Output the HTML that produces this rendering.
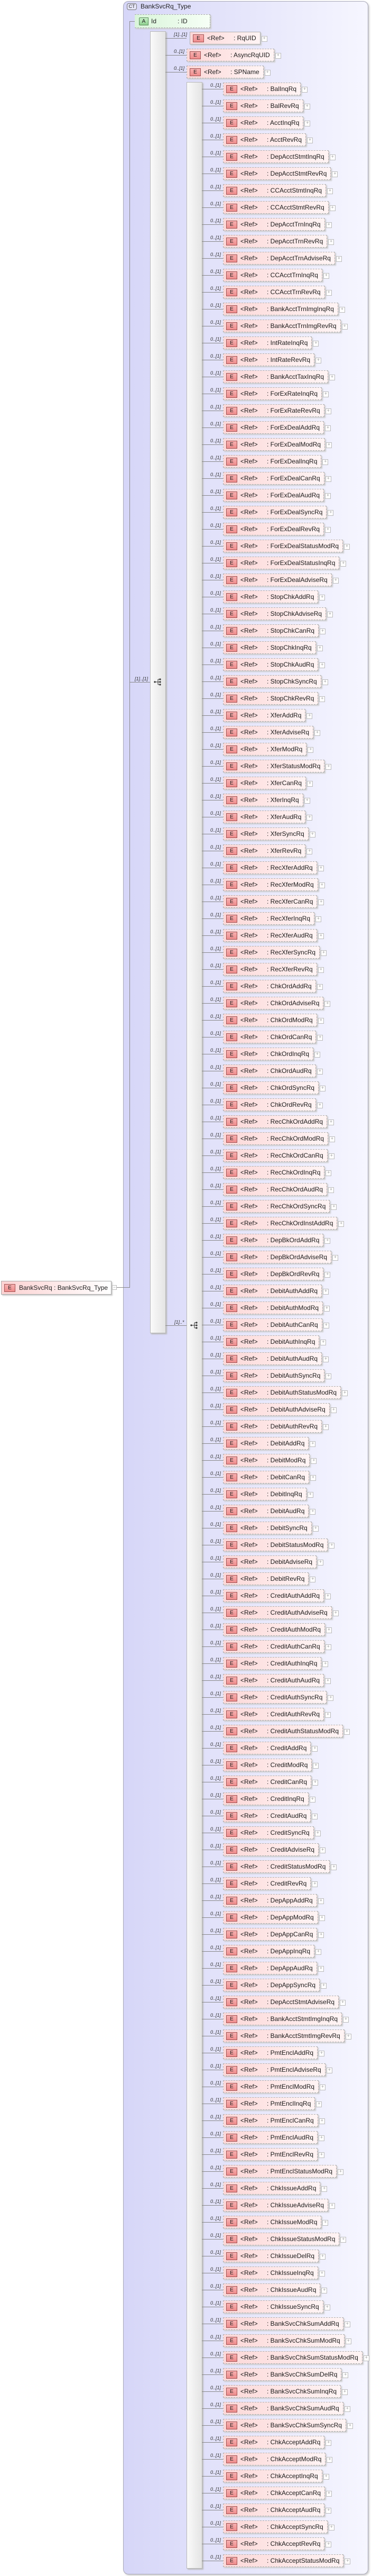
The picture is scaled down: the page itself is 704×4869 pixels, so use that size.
<!DOCTYPE html>
<html><head><meta charset="utf-8">
<style>
*{margin:0;padding:0;box-sizing:border-box}
body{width:704px;height:4869px;background:#fff;position:relative;font-family:"Liberation Sans",Arial,sans-serif;overflow:hidden}
.ct{position:absolute;left:233px;top:2px;width:464px;height:4864px;border:1px solid #a8a8b8;border-radius:10px;background:linear-gradient(to right,#d6d6f8,#e6e6fb 50%,#f6f6ff);box-shadow:2px 2px 3px #ccc}
.cti{position:absolute;left:240px;top:6px;width:19px;height:13px;border:1px solid #777;border-radius:4px;background:#e4e4f6;font-size:9px;line-height:11px;text-align:center;color:#333}
.ctt{position:absolute;left:266px;top:5px;font-size:12px;color:#222}
.vl{position:absolute;background:#888;width:1px}
.hl{position:absolute;background:#888;height:1px}
.bar{position:absolute;border:1px solid #b8b8b8;background:linear-gradient(to right,#fafafa,#e4e4e4);box-shadow:2px 2px 2px #bbb}
.ico{position:absolute;width:18px;height:16px}
.mult{position:absolute;font-size:9px;font-style:italic;color:#333;white-space:nowrap}
.attr{position:absolute;left:255px;top:27px;width:143px;height:26px;border:1px dashed #aaa;border-left:none;background:linear-gradient(to right,#d9f5d9,#f6fff6);box-shadow:2px 2px 2px #ccc}
.ai{position:absolute;left:8px;top:5px;width:18px;height:15px;border:1px solid #5a8a5a;background:linear-gradient(#c8f0c8,#8fd08f);font-size:10px;text-align:center;line-height:13px;color:#222;border-radius:2px 0 0 2px}
.rows{position:absolute}
.r{position:relative;height:32px}
.r::before{content:"";position:absolute;left:0;top:13px;width:40px;height:1px;background:#888}
.r i{position:absolute;left:16px;top:1px;font-size:9px;font-style:italic;color:#333;white-space:nowrap}
.r b{position:absolute;left:40px;top:1px;height:24px;padding:0 7px 0 82px;border:1px dashed #b0b0b0;background:linear-gradient(to right,#fcd8d8,#fff4f4);font-weight:normal;font-size:12px;line-height:22px;color:#1a1a1a;white-space:nowrap;box-shadow:2px 2px 2px #ccc}
.r b.s{border-style:solid;left:46px}
.r b u{position:absolute;left:5px;top:4px;width:21px;height:15px;border:1px solid #a05050;background:linear-gradient(#f7b0b0,#ee8c8c);text-decoration:none;font-size:10px;line-height:13px;text-align:center;color:#222}
.r b s{position:absolute;left:32px;top:0;text-decoration:none}
.r b::after{content:"+";position:absolute;right:-14px;top:7px;width:9px;height:9px;border:1px solid #bbb;background:#fff;font-size:9px;line-height:7px;text-align:center;color:#999}
.el{position:absolute;left:2px;top:2421px;width:209px;height:26px;border:1px solid #aaa;background:linear-gradient(to right,#fcd2d2,#fff);box-shadow:2px 2px 2px #ccc;font-size:12px;line-height:24px;color:#222;white-space:nowrap}
.el u{position:absolute;left:5px;top:5px;width:21px;height:15px;border:1px solid #a05050;background:linear-gradient(#f7b0b0,#ee8c8c);text-decoration:none;font-size:10px;line-height:13px;text-align:center}
.mi{position:absolute;left:212px;top:2429px;width:9px;height:9px;border:1px solid #bbb;background:#fff;font-size:9px;line-height:6px;text-align:center;color:#999}
</style></head><body>
<div class="ct"></div>
<div class="cti">CT</div>
<div class="ctt">BankSvcRq_Type</div>

<div class="vl" style="left:245px;top:40px;height:2394px"></div>
<div class="hl" style="left:245px;top:40px;width:10px"></div>
<div class="attr"><div class="ai">A</div><span style="position:absolute;left:31px;top:5px;font-size:12px;color:#222">Id</span><span style="position:absolute;left:81px;top:5px;font-size:12px;color:#222">: ID</span></div>

<div class="hl" style="left:220px;top:2433px;width:25px"></div>
<div class="el"><u>E</u><span style="position:absolute;left:33px">BankSvcRq : BankSvcRq_Type</span></div>
<div class="mi">−</div>

<div class="hl" style="left:245px;top:1289px;width:39px"></div>
<div class="mult" style="left:255px;top:1278px">[1]..[1]</div>
<div class="bar" style="left:284px;top:59px;width:30px;height:2461px"></div>
<svg class="ico" style="left:290px;top:1281px" viewBox="0 0 18 16"><circle cx="3" cy="8" r="1.6" fill="#333"/><line x1="3" y1="8" x2="9" y2="8" stroke="#333"/><path d="M9 3V13M9 3H13M9 8H13M9 13H13" stroke="#333" fill="none"/><circle cx="13" cy="3" r="1.6" fill="#333"/><circle cx="13" cy="8" r="1.6" fill="#333"/><circle cx="13" cy="13" r="1.6" fill="#333"/></svg>

<div class="hl" style="left:313px;top:2505px;width:40px"></div>
<div class="mult" style="left:330px;top:2494px">[1]..*</div>
<div class="bar" style="left:353px;top:155px;width:30px;height:4700px"></div>
<svg class="ico" style="left:359px;top:2497px" viewBox="0 0 18 16"><circle cx="3" cy="8" r="1.6" fill="#333"/><line x1="3" y1="8" x2="9" y2="8" stroke="#333"/><path d="M9 3V13M9 3H13M9 8H13M9 13H13" stroke="#333" fill="none"/><circle cx="13" cy="3" r="1.6" fill="#333"/><circle cx="13" cy="8" r="1.6" fill="#333"/><circle cx="13" cy="13" r="1.6" fill="#333"/></svg>

<div class="rows" style="left:313px;top:59px">
<div class="r"><i>[1]..[1]</i><b class="s"><u>E</u><s>&lt;Ref&gt;</s>: RqUID</b></div>
<div class="r"><i>0..[1]</i><b><u>E</u><s>&lt;Ref&gt;</s>: AsyncRqUID</b></div>
<div class="r"><i>0..[1]</i><b><u>E</u><s>&lt;Ref&gt;</s>: SPName</b></div>
</div>

<div class="rows" style="left:382px;top:155px">
<div class="r"><i>0..[1]</i><b><u>E</u><s>&lt;Ref&gt;</s>: BalInqRq</b></div>
<div class="r"><i>0..[1]</i><b><u>E</u><s>&lt;Ref&gt;</s>: BalRevRq</b></div>
<div class="r"><i>0..[1]</i><b><u>E</u><s>&lt;Ref&gt;</s>: AcctInqRq</b></div>
<div class="r"><i>0..[1]</i><b><u>E</u><s>&lt;Ref&gt;</s>: AcctRevRq</b></div>
<div class="r"><i>0..[1]</i><b><u>E</u><s>&lt;Ref&gt;</s>: DepAcctStmtInqRq</b></div>
<div class="r"><i>0..[1]</i><b><u>E</u><s>&lt;Ref&gt;</s>: DepAcctStmtRevRq</b></div>
<div class="r"><i>0..[1]</i><b><u>E</u><s>&lt;Ref&gt;</s>: CCAcctStmtInqRq</b></div>
<div class="r"><i>0..[1]</i><b><u>E</u><s>&lt;Ref&gt;</s>: CCAcctStmtRevRq</b></div>
<div class="r"><i>0..[1]</i><b><u>E</u><s>&lt;Ref&gt;</s>: DepAcctTrnInqRq</b></div>
<div class="r"><i>0..[1]</i><b><u>E</u><s>&lt;Ref&gt;</s>: DepAcctTrnRevRq</b></div>
<div class="r"><i>0..[1]</i><b><u>E</u><s>&lt;Ref&gt;</s>: DepAcctTrnAdviseRq</b></div>
<div class="r"><i>0..[1]</i><b><u>E</u><s>&lt;Ref&gt;</s>: CCAcctTrnInqRq</b></div>
<div class="r"><i>0..[1]</i><b><u>E</u><s>&lt;Ref&gt;</s>: CCAcctTrnRevRq</b></div>
<div class="r"><i>0..[1]</i><b><u>E</u><s>&lt;Ref&gt;</s>: BankAcctTrnImgInqRq</b></div>
<div class="r"><i>0..[1]</i><b><u>E</u><s>&lt;Ref&gt;</s>: BankAcctTrnImgRevRq</b></div>
<div class="r"><i>0..[1]</i><b><u>E</u><s>&lt;Ref&gt;</s>: IntRateInqRq</b></div>
<div class="r"><i>0..[1]</i><b><u>E</u><s>&lt;Ref&gt;</s>: IntRateRevRq</b></div>
<div class="r"><i>0..[1]</i><b><u>E</u><s>&lt;Ref&gt;</s>: BankAcctTaxInqRq</b></div>
<div class="r"><i>0..[1]</i><b><u>E</u><s>&lt;Ref&gt;</s>: ForExRateInqRq</b></div>
<div class="r"><i>0..[1]</i><b><u>E</u><s>&lt;Ref&gt;</s>: ForExRateRevRq</b></div>
<div class="r"><i>0..[1]</i><b><u>E</u><s>&lt;Ref&gt;</s>: ForExDealAddRq</b></div>
<div class="r"><i>0..[1]</i><b><u>E</u><s>&lt;Ref&gt;</s>: ForExDealModRq</b></div>
<div class="r"><i>0..[1]</i><b><u>E</u><s>&lt;Ref&gt;</s>: ForExDealInqRq</b></div>
<div class="r"><i>0..[1]</i><b><u>E</u><s>&lt;Ref&gt;</s>: ForExDealCanRq</b></div>
<div class="r"><i>0..[1]</i><b><u>E</u><s>&lt;Ref&gt;</s>: ForExDealAudRq</b></div>
<div class="r"><i>0..[1]</i><b><u>E</u><s>&lt;Ref&gt;</s>: ForExDealSyncRq</b></div>
<div class="r"><i>0..[1]</i><b><u>E</u><s>&lt;Ref&gt;</s>: ForExDealRevRq</b></div>
<div class="r"><i>0..[1]</i><b><u>E</u><s>&lt;Ref&gt;</s>: ForExDealStatusModRq</b></div>
<div class="r"><i>0..[1]</i><b><u>E</u><s>&lt;Ref&gt;</s>: ForExDealStatusInqRq</b></div>
<div class="r"><i>0..[1]</i><b><u>E</u><s>&lt;Ref&gt;</s>: ForExDealAdviseRq</b></div>
<div class="r"><i>0..[1]</i><b><u>E</u><s>&lt;Ref&gt;</s>: StopChkAddRq</b></div>
<div class="r"><i>0..[1]</i><b><u>E</u><s>&lt;Ref&gt;</s>: StopChkAdviseRq</b></div>
<div class="r"><i>0..[1]</i><b><u>E</u><s>&lt;Ref&gt;</s>: StopChkCanRq</b></div>
<div class="r"><i>0..[1]</i><b><u>E</u><s>&lt;Ref&gt;</s>: StopChkInqRq</b></div>
<div class="r"><i>0..[1]</i><b><u>E</u><s>&lt;Ref&gt;</s>: StopChkAudRq</b></div>
<div class="r"><i>0..[1]</i><b><u>E</u><s>&lt;Ref&gt;</s>: StopChkSyncRq</b></div>
<div class="r"><i>0..[1]</i><b><u>E</u><s>&lt;Ref&gt;</s>: StopChkRevRq</b></div>
<div class="r"><i>0..[1]</i><b><u>E</u><s>&lt;Ref&gt;</s>: XferAddRq</b></div>
<div class="r"><i>0..[1]</i><b><u>E</u><s>&lt;Ref&gt;</s>: XferAdviseRq</b></div>
<div class="r"><i>0..[1]</i><b><u>E</u><s>&lt;Ref&gt;</s>: XferModRq</b></div>
<div class="r"><i>0..[1]</i><b><u>E</u><s>&lt;Ref&gt;</s>: XferStatusModRq</b></div>
<div class="r"><i>0..[1]</i><b><u>E</u><s>&lt;Ref&gt;</s>: XferCanRq</b></div>
<div class="r"><i>0..[1]</i><b><u>E</u><s>&lt;Ref&gt;</s>: XferInqRq</b></div>
<div class="r"><i>0..[1]</i><b><u>E</u><s>&lt;Ref&gt;</s>: XferAudRq</b></div>
<div class="r"><i>0..[1]</i><b><u>E</u><s>&lt;Ref&gt;</s>: XferSyncRq</b></div>
<div class="r"><i>0..[1]</i><b><u>E</u><s>&lt;Ref&gt;</s>: XferRevRq</b></div>
<div class="r"><i>0..[1]</i><b><u>E</u><s>&lt;Ref&gt;</s>: RecXferAddRq</b></div>
<div class="r"><i>0..[1]</i><b><u>E</u><s>&lt;Ref&gt;</s>: RecXferModRq</b></div>
<div class="r"><i>0..[1]</i><b><u>E</u><s>&lt;Ref&gt;</s>: RecXferCanRq</b></div>
<div class="r"><i>0..[1]</i><b><u>E</u><s>&lt;Ref&gt;</s>: RecXferInqRq</b></div>
<div class="r"><i>0..[1]</i><b><u>E</u><s>&lt;Ref&gt;</s>: RecXferAudRq</b></div>
<div class="r"><i>0..[1]</i><b><u>E</u><s>&lt;Ref&gt;</s>: RecXferSyncRq</b></div>
<div class="r"><i>0..[1]</i><b><u>E</u><s>&lt;Ref&gt;</s>: RecXferRevRq</b></div>
<div class="r"><i>0..[1]</i><b><u>E</u><s>&lt;Ref&gt;</s>: ChkOrdAddRq</b></div>
<div class="r"><i>0..[1]</i><b><u>E</u><s>&lt;Ref&gt;</s>: ChkOrdAdviseRq</b></div>
<div class="r"><i>0..[1]</i><b><u>E</u><s>&lt;Ref&gt;</s>: ChkOrdModRq</b></div>
<div class="r"><i>0..[1]</i><b><u>E</u><s>&lt;Ref&gt;</s>: ChkOrdCanRq</b></div>
<div class="r"><i>0..[1]</i><b><u>E</u><s>&lt;Ref&gt;</s>: ChkOrdInqRq</b></div>
<div class="r"><i>0..[1]</i><b><u>E</u><s>&lt;Ref&gt;</s>: ChkOrdAudRq</b></div>
<div class="r"><i>0..[1]</i><b><u>E</u><s>&lt;Ref&gt;</s>: ChkOrdSyncRq</b></div>
<div class="r"><i>0..[1]</i><b><u>E</u><s>&lt;Ref&gt;</s>: ChkOrdRevRq</b></div>
<div class="r"><i>0..[1]</i><b><u>E</u><s>&lt;Ref&gt;</s>: RecChkOrdAddRq</b></div>
<div class="r"><i>0..[1]</i><b><u>E</u><s>&lt;Ref&gt;</s>: RecChkOrdModRq</b></div>
<div class="r"><i>0..[1]</i><b><u>E</u><s>&lt;Ref&gt;</s>: RecChkOrdCanRq</b></div>
<div class="r"><i>0..[1]</i><b><u>E</u><s>&lt;Ref&gt;</s>: RecChkOrdInqRq</b></div>
<div class="r"><i>0..[1]</i><b><u>E</u><s>&lt;Ref&gt;</s>: RecChkOrdAudRq</b></div>
<div class="r"><i>0..[1]</i><b><u>E</u><s>&lt;Ref&gt;</s>: RecChkOrdSyncRq</b></div>
<div class="r"><i>0..[1]</i><b><u>E</u><s>&lt;Ref&gt;</s>: RecChkOrdInstAddRq</b></div>
<div class="r"><i>0..[1]</i><b><u>E</u><s>&lt;Ref&gt;</s>: DepBkOrdAddRq</b></div>
<div class="r"><i>0..[1]</i><b><u>E</u><s>&lt;Ref&gt;</s>: DepBkOrdAdviseRq</b></div>
<div class="r"><i>0..[1]</i><b><u>E</u><s>&lt;Ref&gt;</s>: DepBkOrdRevRq</b></div>
<div class="r"><i>0..[1]</i><b><u>E</u><s>&lt;Ref&gt;</s>: DebitAuthAddRq</b></div>
<div class="r"><i>0..[1]</i><b><u>E</u><s>&lt;Ref&gt;</s>: DebitAuthModRq</b></div>
<div class="r"><i>0..[1]</i><b><u>E</u><s>&lt;Ref&gt;</s>: DebitAuthCanRq</b></div>
<div class="r"><i>0..[1]</i><b><u>E</u><s>&lt;Ref&gt;</s>: DebitAuthInqRq</b></div>
<div class="r"><i>0..[1]</i><b><u>E</u><s>&lt;Ref&gt;</s>: DebitAuthAudRq</b></div>
<div class="r"><i>0..[1]</i><b><u>E</u><s>&lt;Ref&gt;</s>: DebitAuthSyncRq</b></div>
<div class="r"><i>0..[1]</i><b><u>E</u><s>&lt;Ref&gt;</s>: DebitAuthStatusModRq</b></div>
<div class="r"><i>0..[1]</i><b><u>E</u><s>&lt;Ref&gt;</s>: DebitAuthAdviseRq</b></div>
<div class="r"><i>0..[1]</i><b><u>E</u><s>&lt;Ref&gt;</s>: DebitAuthRevRq</b></div>
<div class="r"><i>0..[1]</i><b><u>E</u><s>&lt;Ref&gt;</s>: DebitAddRq</b></div>
<div class="r"><i>0..[1]</i><b><u>E</u><s>&lt;Ref&gt;</s>: DebitModRq</b></div>
<div class="r"><i>0..[1]</i><b><u>E</u><s>&lt;Ref&gt;</s>: DebitCanRq</b></div>
<div class="r"><i>0..[1]</i><b><u>E</u><s>&lt;Ref&gt;</s>: DebitInqRq</b></div>
<div class="r"><i>0..[1]</i><b><u>E</u><s>&lt;Ref&gt;</s>: DebitAudRq</b></div>
<div class="r"><i>0..[1]</i><b><u>E</u><s>&lt;Ref&gt;</s>: DebitSyncRq</b></div>
<div class="r"><i>0..[1]</i><b><u>E</u><s>&lt;Ref&gt;</s>: DebitStatusModRq</b></div>
<div class="r"><i>0..[1]</i><b><u>E</u><s>&lt;Ref&gt;</s>: DebitAdviseRq</b></div>
<div class="r"><i>0..[1]</i><b><u>E</u><s>&lt;Ref&gt;</s>: DebitRevRq</b></div>
<div class="r"><i>0..[1]</i><b><u>E</u><s>&lt;Ref&gt;</s>: CreditAuthAddRq</b></div>
<div class="r"><i>0..[1]</i><b><u>E</u><s>&lt;Ref&gt;</s>: CreditAuthAdviseRq</b></div>
<div class="r"><i>0..[1]</i><b><u>E</u><s>&lt;Ref&gt;</s>: CreditAuthModRq</b></div>
<div class="r"><i>0..[1]</i><b><u>E</u><s>&lt;Ref&gt;</s>: CreditAuthCanRq</b></div>
<div class="r"><i>0..[1]</i><b><u>E</u><s>&lt;Ref&gt;</s>: CreditAuthInqRq</b></div>
<div class="r"><i>0..[1]</i><b><u>E</u><s>&lt;Ref&gt;</s>: CreditAuthAudRq</b></div>
<div class="r"><i>0..[1]</i><b><u>E</u><s>&lt;Ref&gt;</s>: CreditAuthSyncRq</b></div>
<div class="r"><i>0..[1]</i><b><u>E</u><s>&lt;Ref&gt;</s>: CreditAuthRevRq</b></div>
<div class="r"><i>0..[1]</i><b><u>E</u><s>&lt;Ref&gt;</s>: CreditAuthStatusModRq</b></div>
<div class="r"><i>0..[1]</i><b><u>E</u><s>&lt;Ref&gt;</s>: CreditAddRq</b></div>
<div class="r"><i>0..[1]</i><b><u>E</u><s>&lt;Ref&gt;</s>: CreditModRq</b></div>
<div class="r"><i>0..[1]</i><b><u>E</u><s>&lt;Ref&gt;</s>: CreditCanRq</b></div>
<div class="r"><i>0..[1]</i><b><u>E</u><s>&lt;Ref&gt;</s>: CreditInqRq</b></div>
<div class="r"><i>0..[1]</i><b><u>E</u><s>&lt;Ref&gt;</s>: CreditAudRq</b></div>
<div class="r"><i>0..[1]</i><b><u>E</u><s>&lt;Ref&gt;</s>: CreditSyncRq</b></div>
<div class="r"><i>0..[1]</i><b><u>E</u><s>&lt;Ref&gt;</s>: CreditAdviseRq</b></div>
<div class="r"><i>0..[1]</i><b><u>E</u><s>&lt;Ref&gt;</s>: CreditStatusModRq</b></div>
<div class="r"><i>0..[1]</i><b><u>E</u><s>&lt;Ref&gt;</s>: CreditRevRq</b></div>
<div class="r"><i>0..[1]</i><b><u>E</u><s>&lt;Ref&gt;</s>: DepAppAddRq</b></div>
<div class="r"><i>0..[1]</i><b><u>E</u><s>&lt;Ref&gt;</s>: DepAppModRq</b></div>
<div class="r"><i>0..[1]</i><b><u>E</u><s>&lt;Ref&gt;</s>: DepAppCanRq</b></div>
<div class="r"><i>0..[1]</i><b><u>E</u><s>&lt;Ref&gt;</s>: DepAppInqRq</b></div>
<div class="r"><i>0..[1]</i><b><u>E</u><s>&lt;Ref&gt;</s>: DepAppAudRq</b></div>
<div class="r"><i>0..[1]</i><b><u>E</u><s>&lt;Ref&gt;</s>: DepAppSyncRq</b></div>
<div class="r"><i>0..[1]</i><b><u>E</u><s>&lt;Ref&gt;</s>: DepAcctStmtAdviseRq</b></div>
<div class="r"><i>0..[1]</i><b><u>E</u><s>&lt;Ref&gt;</s>: BankAcctStmtImgInqRq</b></div>
<div class="r"><i>0..[1]</i><b><u>E</u><s>&lt;Ref&gt;</s>: BankAcctStmtImgRevRq</b></div>
<div class="r"><i>0..[1]</i><b><u>E</u><s>&lt;Ref&gt;</s>: PmtEnclAddRq</b></div>
<div class="r"><i>0..[1]</i><b><u>E</u><s>&lt;Ref&gt;</s>: PmtEnclAdviseRq</b></div>
<div class="r"><i>0..[1]</i><b><u>E</u><s>&lt;Ref&gt;</s>: PmtEnclModRq</b></div>
<div class="r"><i>0..[1]</i><b><u>E</u><s>&lt;Ref&gt;</s>: PmtEnclInqRq</b></div>
<div class="r"><i>0..[1]</i><b><u>E</u><s>&lt;Ref&gt;</s>: PmtEnclCanRq</b></div>
<div class="r"><i>0..[1]</i><b><u>E</u><s>&lt;Ref&gt;</s>: PmtEnclAudRq</b></div>
<div class="r"><i>0..[1]</i><b><u>E</u><s>&lt;Ref&gt;</s>: PmtEnclRevRq</b></div>
<div class="r"><i>0..[1]</i><b><u>E</u><s>&lt;Ref&gt;</s>: PmtEnclStatusModRq</b></div>
<div class="r"><i>0..[1]</i><b><u>E</u><s>&lt;Ref&gt;</s>: ChkIssueAddRq</b></div>
<div class="r"><i>0..[1]</i><b><u>E</u><s>&lt;Ref&gt;</s>: ChkIssueAdviseRq</b></div>
<div class="r"><i>0..[1]</i><b><u>E</u><s>&lt;Ref&gt;</s>: ChkIssueModRq</b></div>
<div class="r"><i>0..[1]</i><b><u>E</u><s>&lt;Ref&gt;</s>: ChkIssueStatusModRq</b></div>
<div class="r"><i>0..[1]</i><b><u>E</u><s>&lt;Ref&gt;</s>: ChkIssueDelRq</b></div>
<div class="r"><i>0..[1]</i><b><u>E</u><s>&lt;Ref&gt;</s>: ChkIssueInqRq</b></div>
<div class="r"><i>0..[1]</i><b><u>E</u><s>&lt;Ref&gt;</s>: ChkIssueAudRq</b></div>
<div class="r"><i>0..[1]</i><b><u>E</u><s>&lt;Ref&gt;</s>: ChkIssueSyncRq</b></div>
<div class="r"><i>0..[1]</i><b><u>E</u><s>&lt;Ref&gt;</s>: BankSvcChkSumAddRq</b></div>
<div class="r"><i>0..[1]</i><b><u>E</u><s>&lt;Ref&gt;</s>: BankSvcChkSumModRq</b></div>
<div class="r"><i>0..[1]</i><b><u>E</u><s>&lt;Ref&gt;</s>: BankSvcChkSumStatusModRq</b></div>
<div class="r"><i>0..[1]</i><b><u>E</u><s>&lt;Ref&gt;</s>: BankSvcChkSumDelRq</b></div>
<div class="r"><i>0..[1]</i><b><u>E</u><s>&lt;Ref&gt;</s>: BankSvcChkSumInqRq</b></div>
<div class="r"><i>0..[1]</i><b><u>E</u><s>&lt;Ref&gt;</s>: BankSvcChkSumAudRq</b></div>
<div class="r"><i>0..[1]</i><b><u>E</u><s>&lt;Ref&gt;</s>: BankSvcChkSumSyncRq</b></div>
<div class="r"><i>0..[1]</i><b><u>E</u><s>&lt;Ref&gt;</s>: ChkAcceptAddRq</b></div>
<div class="r"><i>0..[1]</i><b><u>E</u><s>&lt;Ref&gt;</s>: ChkAcceptModRq</b></div>
<div class="r"><i>0..[1]</i><b><u>E</u><s>&lt;Ref&gt;</s>: ChkAcceptInqRq</b></div>
<div class="r"><i>0..[1]</i><b><u>E</u><s>&lt;Ref&gt;</s>: ChkAcceptCanRq</b></div>
<div class="r"><i>0..[1]</i><b><u>E</u><s>&lt;Ref&gt;</s>: ChkAcceptAudRq</b></div>
<div class="r"><i>0..[1]</i><b><u>E</u><s>&lt;Ref&gt;</s>: ChkAcceptSyncRq</b></div>
<div class="r"><i>0..[1]</i><b><u>E</u><s>&lt;Ref&gt;</s>: ChkAcceptRevRq</b></div>
<div class="r"><i>0..[1]</i><b><u>E</u><s>&lt;Ref&gt;</s>: ChkAcceptStatusModRq</b></div>
</div>
</body></html>
